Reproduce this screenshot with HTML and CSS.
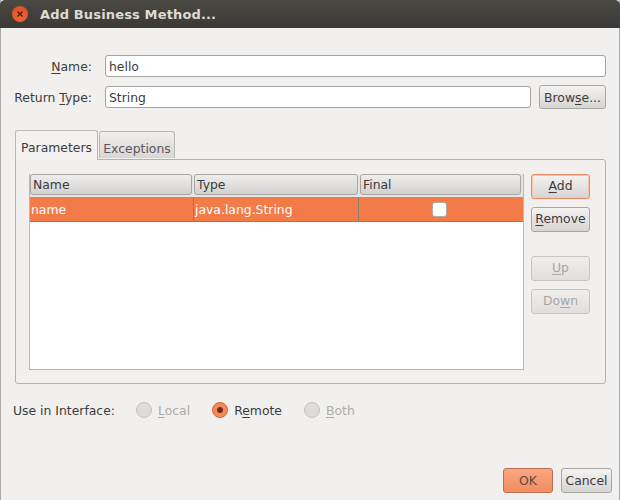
FILE: index.html
```html
<!DOCTYPE html>
<html lang="en">
<head>
  <meta charset="UTF-8" />
  <title>Add Business Method...</title>
  <link rel="stylesheet" href="styles.css">
</head>
<body>
  <div class="window">
    <div class="titlebar">
      <span class="close">
        <svg width="16" height="16" viewBox="0 0 16 16">
          <path d="M5.5 5.5l5 5M10.5 5.5l-5 5" stroke="#4a1c0c" stroke-width="1.4" fill="none"/>
        </svg>
      </span>
      <span class="title">Add Business Method...</span>
    </div>

    <div class="fields">
      <div class="field name-field">
        <label class="field-label"><u>N</u>ame:</label>
        <div class="input">hello</div>
      </div>
      <div class="field type-field">
        <label class="field-label">Return <u>T</u>ype:</label>
        <div class="input">String</div>
        <button class="btn browse">Brow<u>s</u>e...</button>
      </div>
    </div>

    <div class="tabs">
      <div class="tab active">Parameters</div>
      <div class="tab">Exceptions</div>
    </div>
    <div class="panel">
      <div class="table">
        <div class="thead">
          <div class="th col-name">Name</div>
          <div class="th col-type">Type</div>
          <div class="th col-final">Final</div>
        </div>
        <div class="row">
          <div class="td col-name">name</div>
          <div class="td col-type">java.lang.String</div>
          <div class="td col-final"><span class="check"></span></div>
        </div>
      </div>
      <div class="side">
        <button class="btn focus"><u>A</u>dd</button>
        <button class="btn"><u>R</u>emove</button>
        <button class="btn off up"><u>U</u>p</button>
        <button class="btn off">Do<u>w</u>n</button>
      </div>
    </div>

    <div class="radios">
      <span class="radio-label">Use in Interface:</span>
      <span class="radio off local"><i class="dot"></i><span><u>L</u>ocal</span></span>
      <span class="radio on"><i class="dot"></i><span>R<u>e</u>mote</span></span>
      <span class="radio off both"><i class="dot"></i><span><u>B</u>oth</span></span>
    </div>

    <div class="actions">
      <button class="btn ok">OK</button>
      <button class="btn cancel">Cancel</button>
    </div>
  </div>
</body>
</html>
```

FILE: styles.css
```css
* {
  box-sizing: border-box;
}
html, body {
  margin: 0;
  padding: 0;
}
body {
  width: 620px;
  height: 500px;
  overflow: hidden;
  font-family: "DejaVu Sans", sans-serif;
  font-size: 12.4px;
  color: #3c3c3c;
}
u {
  text-underline-offset: 2px;
}
.window {
  width: 620px;
  height: 500px;
  display: flex;
  flex-direction: column;
  background: #f1f0ee;
  border-left: 1px solid #aaa9a6;
  border-right: 1px solid #aaa9a6;
}
.titlebar {
  height: 28px;
  margin: 0 -1px;
  flex: none;
  display: flex;
  align-items: center;
  background: linear-gradient(#4a4944, #3a3935);
  border-radius: 5px 5px 0 0;
  color: #dfdbd2;
  font-weight: bold;
  font-size: 13px;
}
.close {
  width: 16px;
  height: 16px;
  margin-left: 12px;
  margin-right: 12px;
  border-radius: 50%;
  background: radial-gradient(circle at 50% 70%, #f0683a, #d9491f);
  display: flex;
}
.title {
  letter-spacing: 0.15px;
}

.fields {
  padding: 27px 13px 0 12px;
}
.field {
  display: flex;
  align-items: center;
}
.name-field {
  height: 22px;
}
.type-field {
  height: 24px;
  margin-top: 8px;
}
.field-label {
  width: 79px;
  margin-right: 13px;
  padding-top: 1px;
  text-align: right;
  white-space: nowrap;
}
.input {
  flex: 1;
  height: 22px;
  padding: 1px 3px 0;
  line-height: 20px;
  background: #fff;
  border: 1px solid #a5a4a1;
  border-radius: 3px;
}

.btn {
  display: block;
  padding: 0 0 2px;
  font-family: inherit;
  font-size: inherit;
  color: #3c3c3c;
  background: linear-gradient(#f4f3f2, #d6d5d3);
  border: 1px solid #a8a7a4;
  border-radius: 3px;
}
.browse {
  width: 67px;
  height: 24px;
  margin-left: 8px;
  padding: 1px 0 0;
}

.tabs {
  display: flex;
  align-items: flex-end;
  height: 30px;
  margin: 20px 0 0 14px;
  position: relative;
  z-index: 1;
}
.tab {
  width: 76px;
  height: 27px;
  margin-left: 1px;
  margin-bottom: 1px;
  padding-top: 3px;
  text-align: center;
  line-height: 28px;
  color: #5e5560;
  background: linear-gradient(#f0efed, #d8d7d4);
  border: 1px solid #b9b8b5;
  border-bottom: none;
  border-radius: 3px 3px 0 0;
}
.tab.active {
  width: 83px;
  height: 30px;
  margin: 0 0 -1px 0;
  padding-top: 2px;
  line-height: 29px;
  color: #3c3c3c;
  background: #f3f2f1;
}
.panel {
  width: 591px;
  height: 225px;
  margin-left: 14px;
  padding: 14px 14px 0 13px;
  display: flex;
  border: 1px solid #b3b2af;
  border-radius: 0 3px 3px 3px;
}
.table {
  width: 495px;
  height: 196px;
  background: #fff;
  border: 1px solid #b9b8b5;
  border-top: none;
}
.thead {
  display: flex;
  height: 23px;
  background: #e6e5e3;
}
.th {
  height: 21px;
  margin-right: 2px;
  padding-left: 2px;
  line-height: 19px;
  background: linear-gradient(#efeeec, #d2d1cf);
  border: 1px solid #a8a7a4;
  border-radius: 3px;
}
.col-name {
  width: 163px;
}
.col-type {
  width: 165px;
}
.col-final {
  width: 162px;
}
.row {
  display: flex;
  height: 25px;
  background: #f37b48;
  border-bottom: 1px solid #8f7a70;
}
.td {
  height: 24px;
  padding-left: 1px;
  line-height: 26px;
  color: #fff;
  border-right: 1px solid #8f7a70;
}
.td.col-name {
  width: 164px;
}
.td.col-type {
  width: 165px;
}
.td.col-final {
  flex: 1;
  padding: 0 3px 0 0;
  border-right: none;
  display: flex;
  align-items: center;
  justify-content: center;
}
.check {
  width: 15px;
  height: 15px;
  background: #fff;
  border: 1px solid #b5a9a2;
  border-radius: 3px;
}
.side {
  width: 59px;
  margin-left: 7px;
  display: flex;
  flex-direction: column;
}
.side .btn {
  width: 59px;
  height: 25px;
  margin-bottom: 8px;
}
.side .btn.up {
  margin-top: 16px;
}
.btn.focus {
  border-color: #f08a60;
  box-shadow: inset 0 0 0 1px #f8c4ab;
}
.btn.off {
  color: #a9a5a8;
  background: linear-gradient(#efeeec, #e0dfdd);
  border-color: #c6c5c2;
}

.radios {
  display: flex;
  align-items: center;
  height: 18px;
  margin: 17px 0 0 12px;
}
.radio-label {
  width: 123px;
}
.radio {
  display: flex;
  align-items: center;
  gap: 6px;
  margin-right: 22px;
}
.radio.off {
  color: #aeaca9;
}
.radio .dot {
  width: 16px;
  height: 16px;
  border-radius: 50%;
  background: #dedddb;
  border: 1px solid #c4c3c0;
}
.radio.on .dot {
  background: radial-gradient(circle, #6b3018 0 2.5px, #f3885a 3.5px);
  border-color: #d8612f;
}

.actions {
  display: flex;
  justify-content: flex-end;
  gap: 8px;
  margin-top: auto;
  padding: 0 7px 7px 0;
}
.actions .btn {
  height: 25px;
  padding: 0;
}
.ok {
  width: 50px;
  background: linear-gradient(#f9a680, #f48c62);
  border-color: #b9714f;
}
.actions .ok {
  color: #5c4a40;
}
.cancel {
  width: 51px;
}
```
